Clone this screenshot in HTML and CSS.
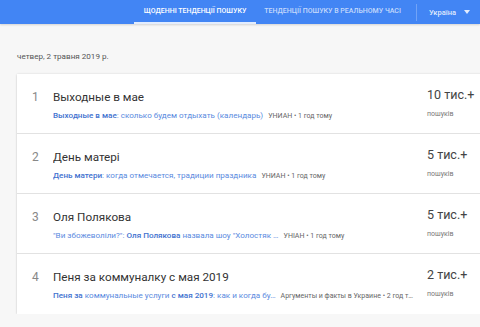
FILE: index.html
```html
<!DOCTYPE html>
<html lang="uk">
<head>
    <meta charset="UTF-8">
    <meta name="viewport" content="width=device-width, initial-scale=1.0">
    <title>Google Trends</title>
    <link rel="stylesheet" href="styles.css">
</head>
<body>
    <div class="header">
        <div class="tab tab-active">Щоденні тенденції пошуку</div>
        <div class="tab">Тенденції пошуку в реальному часі</div>
        <div class="divider"></div>
        <div class="country">Україна <span class="arrow"></span></div>
    </div>

    <div class="main">
        <div class="date">четвер, 2 травня 2019 р.</div>
        <div class="card">
            <div class="row">
                <div class="rank">1</div>
                <div class="details">
                    <div class="title">Выходные в мае</div>
                    <div class="summary">
                        <span class="link"><b>Выходные в мае</b>: сколько будем отдыхать (календарь)</span>
                        <span class="source">УНИАН • 1 год тому</span>
                    </div>
                </div>
                <div class="count">
                    <div class="count-value">10 тис.+</div>
                    <div class="count-label">пошуків</div>
                </div>
            </div>
            <div class="row">
                <div class="rank">2</div>
                <div class="details">
                    <div class="title">День матері</div>
                    <div class="summary">
                        <span class="link"><b>День матери</b>: когда отмечается, традиции праздника</span>
                        <span class="source">УНИАН • 1 год тому</span>
                    </div>
                </div>
                <div class="count">
                    <div class="count-value">5 тис.+</div>
                    <div class="count-label">пошуків</div>
                </div>
            </div>
            <div class="row">
                <div class="rank">3</div>
                <div class="details">
                    <div class="title">Оля Полякова</div>
                    <div class="summary">
                        <span class="link">"Ви збожеволіли?": <b>Оля Полякова</b> назвала шоу "Холостяк …</span>
                        <span class="source">УНІАН • 1 год тому</span>
                    </div>
                </div>
                <div class="count">
                    <div class="count-value">5 тис.+</div>
                    <div class="count-label">пошуків</div>
                </div>
            </div>
            <div class="row">
                <div class="rank">4</div>
                <div class="details">
                    <div class="title">Пеня за коммуналку с мая 2019</div>
                    <div class="summary">
                        <span class="link"><b>Пеня за</b> коммунальные услуги <b>с мая 2019</b>: как и когда бу…</span>
                        <span class="source">Аргументы и факты в Украине • 2 год т…</span>
                    </div>
                </div>
                <div class="count">
                    <div class="count-value">2 тис.+</div>
                    <div class="count-label">пошуків</div>
                </div>
            </div>
        </div>
    </div>
</body>
</html>
```

FILE: styles.css
```css
body {
    margin: 0;
    padding: 0;
    background: #f7f7f7;
    font-family: Roboto, "Noto Sans", sans-serif;
    color: #333;
    overflow: hidden;
}

/* top bar */
.header {
    display: flex;
    justify-content: flex-end;
    align-items: center;
    height: 24px;
    background: #4285f4;
    padding-right: 10px;
    box-shadow: 0 1px 2px rgba(0, 0, 0, 0.15);
}
.tab {
    display: flex;
    align-items: center;
    height: 24px;
    box-sizing: border-box;
    padding: 0 8px;
    border-bottom: 2px solid transparent;
    font-size: 7px;
    font-weight: 500;
    text-transform: uppercase;
    color: rgba(255, 255, 255, 0.7);
    white-space: nowrap;
}
.tab-active {
    padding: 0 10px;
    color: #fff;
    border-bottom-color: rgba(255, 255, 255, 0.85);
}
.divider {
    width: 1px;
    height: 17px;
    background: rgba(255, 255, 255, 0.25);
    margin: 0 12px 0 7px;
}
.country {
    display: flex;
    align-items: center;
    font-size: 7.5px;
    font-weight: 500;
    color: rgba(255, 255, 255, 0.85);
}
.arrow {
    width: 0;
    height: 0;
    margin-left: 8px;
    border-left: 3px solid transparent;
    border-right: 3px solid transparent;
    border-top: 4px solid rgba(255, 255, 255, 0.85);
}

/* list */
.main {
    padding-left: 17px;
}
.date {
    margin-top: 27px;
    margin-bottom: 13px;
    font-size: 8.1px;
    line-height: 10px;
    color: #555;
}
.card {
    width: 480px;
    background: #fff;
    box-shadow: 0 0 2px rgba(0, 0, 0, 0.12), 0 1px 2px rgba(0, 0, 0, 0.1);
}
.row {
    display: flex;
    align-items: flex-start;
    height: 60px;
    box-sizing: border-box;
    padding-top: 15px;
    border-bottom: 1px solid #e2e2e2;
}
.row:last-child {
    border-bottom: none;
}
.rank {
    width: 21px;
    padding-left: 15px;
    font-size: 12px;
    line-height: 16px;
    color: #888;
}
.details {
    flex: 1;
    white-space: nowrap;
    overflow: hidden;
}
.title {
    font-size: 11.7px;
    line-height: 16px;
    color: #333;
}
.summary {
    margin-top: 5px;
    font-size: 8.1px;
    line-height: 10px;
}
.link {
    color: #5a8ae0;
}
.link b {
    font-weight: 500;
    color: #3f72cf;
}
.source {
    margin-left: 3px;
    font-size: 7px;
    color: #666;
}
.count {
    width: 70px;
    margin-top: -2px;
}
.count-value {
    font-size: 12.5px;
    line-height: 16px;
    color: #444;
}
.count-label {
    margin-top: 6px;
    font-size: 7px;
    line-height: 10px;
    color: #777;
}
```
